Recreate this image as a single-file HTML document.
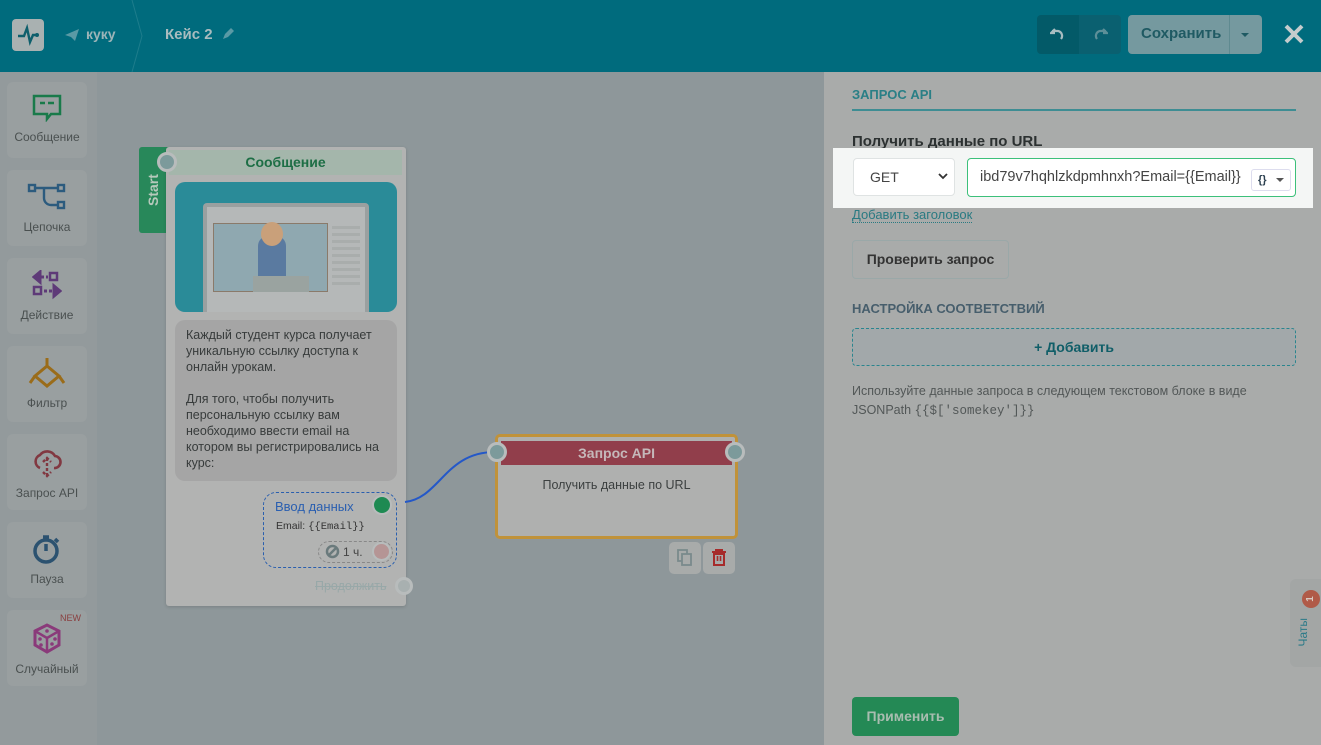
<!DOCTYPE html>
<html><head><meta charset="utf-8">
<style>
*{box-sizing:border-box;margin:0;padding:0}
body{width:1321px;height:745px;overflow:hidden;font-family:"Liberation Sans","DejaVu Sans",sans-serif;background:#8e979a;position:relative}
.abs{position:absolute}
.hdr{left:0;top:0;width:1321px;height:72px;background:#006b7d}
.side{left:0;top:72px;width:97px;height:673px;background:#939a9c}
.card{position:absolute;left:7px;width:80px;height:76px;background:#999fa0;border-radius:6px;text-align:center;font-size:12px;color:#4a5050}
.card svg{display:block;margin:12px auto 8px}
.panel{left:824px;top:72px;width:497px;height:673px;background:#a9abaa}
</style></head><body>
<div class="abs hdr"></div>
<div class="abs" style="left:12px;top:19px;width:32px;height:32px;background:#a9b1b1;border-radius:4px"></div>
<svg class="abs" style="left:12px;top:19px" width="32" height="32"><path d="M6 17h6l3-8 3 14 3-7h5" fill="none" stroke="#0e5f6c" stroke-width="2.4"/><circle cx="25" cy="16" r="2" fill="#0e5f6c"/></svg>
<svg class="abs" style="left:64px;top:28px" width="16" height="14"><path d="M1 7L15 1 11 13 7 9z" fill="#5a9aa5"/></svg>
<div class="abs" style="left:86px;top:26px;color:#9cb4b8;font-weight:bold;font-size:14px">куку</div>
<svg class="abs" style="left:128px;top:0" width="20" height="72"><path d="M4 0L14 36 4 72" fill="none" stroke="#1d7d8c" stroke-width="1"/></svg>
<div class="abs" style="left:165px;top:26px;color:#a9bcbf;font-weight:bold;font-size:15px">Кейс 2</div>
<svg class="abs" style="left:221px;top:27px" width="14" height="14"><path d="M2 12l2-5 6-6 3 3-6 6z" fill="#5a9aa5"/></svg>
<div class="abs" style="left:1037px;top:15px;width:42px;height:39px;background:#035a68;border-radius:4px 0 0 4px"></div>
<div class="abs" style="left:1079px;top:15px;width:42px;height:39px;background:#0a6070;border-radius:0 4px 4px 0"></div>
<svg class="abs" style="left:1050px;top:25px" width="16" height="16"><path d="M5 4L1 8 5 8M2 6h6a5 5 0 0 1 3 8" fill="none" stroke="#a8bcc0" stroke-width="2.2"/></svg>
<svg class="abs" style="left:1092px;top:25px" width="16" height="16"><path d="M11 4l4 4-4 0M14 6H8a5 5 0 0 0-3 8" fill="none" stroke="#5d8f98" stroke-width="2.2"/></svg>
<div class="abs" style="left:1128px;top:15px;width:134px;height:39px;background:#75999f;border-radius:4px"></div>
<div class="abs" style="left:1229px;top:15px;width:1px;height:39px;background:#5f8a90"></div>
<div class="abs" style="left:1141px;top:25px;color:#1f5a63;font-weight:bold;font-size:15px">Сохранить</div>
<div class="abs" style="left:1241px;top:33px;border:4px solid transparent;border-top-color:#1f5a63"></div>
<svg class="abs" style="left:1284px;top:24px" width="20" height="20"><path d="M2 2L18 18M18 2L2 18" stroke="#c5cccd" stroke-width="4"/></svg>

<div class="abs side"></div>
<div class="card" style="top:82px"><svg width="30" height="28"><path d="M2 2h26v18H19l-4 5v-5H2z" fill="none" stroke="#197a4a" stroke-width="2.5"/><path d="M8 9h5M16 9h6" stroke="#197a4a" stroke-width="2.5"/></svg>Сообщение</div>
<div class="card" style="top:170px"><svg width="40" height="30"><rect x="2" y="3" width="6" height="6" fill="none" stroke="#2c5b7e" stroke-width="2.4"/><rect x="31" y="3" width="6" height="6" fill="none" stroke="#2c5b7e" stroke-width="2.4"/><rect x="31" y="20" width="6" height="6" fill="none" stroke="#2c5b7e" stroke-width="2.4"/><path d="M8 6h23M17 6v10a7 7 0 0 0 7 7h7" fill="none" stroke="#2c5b7e" stroke-width="2.4"/></svg>Цепочка</div>
<div class="card" style="top:258px"><svg width="30" height="30"><path d="M2 7l6-5v10zM9 7h3M14 7h2" stroke="#5e3a78" stroke-width="3" fill="#5e3a78"/><rect x="18" y="3" width="7" height="7" fill="none" stroke="#5e3a78" stroke-width="2.5"/><rect x="2" y="17" width="7" height="7" fill="none" stroke="#5e3a78" stroke-width="2.5"/><path d="M12 21h3M17 21h3M28 21l-6-5v10z" stroke="#5e3a78" stroke-width="3" fill="#5e3a78"/></svg>Действие</div>
<div class="card" style="top:346px"><svg width="44" height="30"><path d="M22 0v8L10 18l12 10 12-10L22 8M10 18l-5 7M34 18l5 7" fill="none" stroke="#9a6c1a" stroke-width="3"/></svg>Фильтр</div>
<div class="card" style="top:434px"><svg width="32" height="32"><path d="M9 22a7 7 0 0 1 0-13 9 9 0 0 1 15 1 6 6 0 0 1-1 12" fill="none" stroke="#813841" stroke-width="2.6"/><path d="M16 12v18M12 16l4-4 4 4M12 26l4 4 4-4" fill="none" stroke="#813841" stroke-width="2.4" stroke-dasharray="3 2"/></svg>Запрос API</div>
<div class="card" style="top:522px"><svg width="30" height="30"><circle cx="14" cy="17" r="11" fill="none" stroke="#2c5270" stroke-width="3.5"/><path d="M14 10v7M11 3h6M23 5l3 3" stroke="#2c5270" stroke-width="3.5"/></svg>Пауза</div>
<div class="card" style="top:610px"><div style="position:absolute;right:6px;top:3px;font-size:9px;color:#8a4040">NEW</div><svg width="32" height="32"><path d="M4 9l12-6 12 6v14l-12 7-12-7z" fill="none" stroke="#8a3a7a" stroke-width="3"/><path d="M4 9l12 7 12-7M16 16v14" stroke="#8a3a7a" stroke-width="2.5" fill="none"/><circle cx="9" cy="17" r="1.8" fill="#8a3a7a"/><circle cx="10" cy="23" r="1.8" fill="#8a3a7a"/><circle cx="21" cy="22" r="1.8" fill="#8a3a7a"/><circle cx="24" cy="17" r="1.8" fill="#8a3a7a"/><circle cx="16" cy="9" r="1.8" fill="#8a3a7a"/></svg>Случайный</div>

<div class="abs" style="left:139px;top:147px;width:30px;height:86px;background:#28885a;border-radius:3px 0 0 3px"></div>
<div class="abs" style="left:139px;top:147px;width:28px;height:86px;color:#b7c9bc;font-weight:bold;font-size:14px;writing-mode:vertical-rl;transform:rotate(180deg);text-align:center;line-height:28px">Start</div>
<div class="abs" style="left:166px;top:147px;width:240px;height:459px;background:#b2b3b2;border-radius:3px;box-shadow:0 1px 3px rgba(0,0,0,.15)"></div>
<div class="abs" style="left:169px;top:150px;width:233px;height:25px;background:#a4b6ab;text-align:center;color:#1d6e45;font-weight:bold;font-size:14px;line-height:25px">Сообщение</div>
<div class="abs" style="left:157px;top:152px;width:20px;height:20px;border-radius:50%;background:#7c9a9b;border:3px solid #b8bcbc"></div>
<div class="abs" style="left:175px;top:182px;width:222px;height:130px;background:#2a8b98;border-radius:10px;overflow:hidden">
 <div style="position:absolute;left:28px;top:21px;width:166px;height:115px;background:#9aa0a0;border-radius:4px"></div>
 <div style="position:absolute;left:32px;top:25px;width:158px;height:110px;background:#b5b8b8"></div>
 <div style="position:absolute;left:38px;top:41px;width:115px;height:69px;background:#8fa8b0;border:1px solid #8a7a6a"></div>
 <div style="position:absolute;left:83px;top:54px;width:28px;height:56px;background:#5a7aa0;border-radius:10px 10px 0 0"></div>
 <div style="position:absolute;left:86px;top:40px;width:22px;height:24px;background:#c9a07a;border-radius:50%"></div>
 <div style="position:absolute;left:78px;top:94px;width:56px;height:16px;background:#9aa3a0"></div>
 <div style="position:absolute;left:157px;top:44px;width:28px;height:60px;background:repeating-linear-gradient(#a9adac 0 3px,#b5b8b8 3px 7px)"></div>
</div>
<div class="abs" style="left:175px;top:320px;width:222px;height:161px;background:#a5a5a5;border-radius:10px;padding:7px 11px;font-size:12.5px;line-height:16px;color:#373b3b">Каждый студент курса получает уникальную ссылку доступа к онлайн урокам.<br><br>Для того, чтобы получить персональную ссылку вам необходимо ввести email на котором вы регистрировались на курс:</div>
<div class="abs" style="left:263px;top:492px;width:134px;height:76px;border:1px dashed #2a5fae;border-radius:13px"></div>
<div class="abs" style="left:275px;top:499px;font-size:13px;color:#2a5fb0">Ввод данных</div>
<div class="abs" style="left:276px;top:520px;font-size:10.5px;color:#333">Email: <span style="font-family:'Liberation Mono',monospace">{{Email}}</span></div>
<div class="abs" style="left:374px;top:497px;width:16px;height:16px;border-radius:50%;background:#1e8a52;box-shadow:0 0 0 2px #b8bcbc"></div>
<div class="abs" style="left:318px;top:541px;width:75px;height:22px;border:1px dashed #888;border-radius:11px;font-size:12px;color:#444;line-height:20px;padding-left:24px">1 ч.</div>
<svg class="abs" style="left:325px;top:544px" width="15" height="15"><circle cx="7.5" cy="7.5" r="5.5" fill="none" stroke="#6a7a7c" stroke-width="2.5"/><path d="M4 11L11 4" stroke="#6a7a7c" stroke-width="2.5"/></svg>
<div class="abs" style="left:374px;top:544px;width:15px;height:15px;border-radius:50%;background:#b59595;box-shadow:0 0 0 2px #b8bcbc"></div>
<div class="abs" style="left:315px;top:579px;font-size:12.5px;color:#98a8a8;text-decoration:line-through">Продолжить</div>
<div class="abs" style="left:395px;top:577px;width:18px;height:18px;border-radius:50%;background:#a8b0b0;border:3px solid #b8bcbc"></div>
<svg class="abs" style="left:395px;top:440px" width="110" height="80"><path d="M10 62C45 58 50 12 100 12" fill="none" stroke="#2458c8" stroke-width="2"/></svg>

<div class="abs" style="left:495px;top:434px;width:243px;height:105px;border:3px solid #c0923a;border-radius:5px;background:#afb0af"></div>
<div class="abs" style="left:501px;top:441px;width:231px;height:24px;background:#913e4b;color:#c5b8ba;font-weight:bold;font-size:14px;text-align:center;line-height:24px">Запрос API</div>
<div class="abs" style="left:496px;top:478px;width:241px;text-align:center;font-size:12.5px;color:#3c4040">Получить данные по URL</div>
<div class="abs" style="left:487px;top:442px;width:20px;height:20px;border-radius:50%;background:#7c9a9b;border:3px solid #b8bcbc"></div>
<div class="abs" style="left:725px;top:442px;width:20px;height:20px;border-radius:50%;background:#7c9a9b;border:3px solid #b8bcbc"></div>
<div class="abs" style="left:669px;top:542px;width:32px;height:32px;background:#a8abaa;border-radius:5px"></div>
<div class="abs" style="left:703px;top:542px;width:32px;height:32px;background:#a8abaa;border-radius:5px"></div>
<svg class="abs" style="left:677px;top:549px" width="16" height="18"><rect x="1" y="1" width="9" height="11" fill="none" stroke="#7a8a8c" stroke-width="1.8"/><rect x="5" y="5" width="9" height="11" fill="#a8abaa" stroke="#7a8a8c" stroke-width="1.8"/></svg>
<svg class="abs" style="left:711px;top:549px" width="16" height="18"><path d="M1 3h14M5 3V1h6v2M3 5h10v11H3z" fill="none" stroke="#a62b2b" stroke-width="2"/><path d="M6.5 7v5M9.5 7v5" stroke="#a62b2b" stroke-width="1.6"/></svg>

<div class="abs panel"></div>
<div class="abs" style="left:852px;top:87px;font-size:13px;font-weight:bold;color:#2a7f86">ЗАПРОС API</div>
<div class="abs" style="left:852px;top:109px;width:444px;height:2px;background:#3e8d93"></div>
<div class="abs" style="left:852px;top:133px;font-size:15px;font-weight:bold;color:#2c3131">Получить данные по URL</div>
<div class="abs" style="left:833px;top:148px;width:480px;height:60px;background:#f4f6f5"></div>
<div class="abs" style="left:853px;top:158px;width:102px;height:38px;background:#fff;border:1px solid #dfe3e3;border-radius:4px;font-size:14px;color:#444;line-height:36px;padding-left:16px">GET</div>
<svg class="abs" style="left:938px;top:173px" width="10" height="8"><path d="M1 1l4 4 4-4" fill="none" stroke="#333" stroke-width="1.8"/></svg>
<div class="abs" style="left:967px;top:158px;width:329px;height:39px;background:#fff;border:1px solid #3cc07a;border-radius:4px;font-size:14.5px;color:#444;line-height:37px;padding-left:12px;overflow:hidden;white-space:nowrap">ibd79v7hqhlzkdpmhnxh?Email={{Email}}</div>
<div class="abs" style="left:1251px;top:169px;width:40px;height:22px;background:#fff;border:1px solid #dde;border-radius:3px;font-size:11px;font-weight:bold;color:#2c4050;line-height:20px;padding-left:6px">{}</div>
<div class="abs" style="left:1276px;top:178px;border:4px solid transparent;border-top-color:#555"></div>
<div class="abs" style="left:852px;top:207px;font-size:13px;color:#2a7a82;border-bottom:1px dotted #2a7a82;line-height:15px">Добавить заголовок</div>
<div class="abs" style="left:852px;top:240px;width:157px;height:39px;border:1px solid #9aa8a8;border-radius:4px;font-size:14px;font-weight:bold;color:#333;line-height:37px;text-align:center">Проверить запрос</div>
<div class="abs" style="left:852px;top:301px;font-size:13px;font-weight:bold;color:#475e6c">НАСТРОЙКА СООТВЕТСТВИЙ</div>
<div class="abs" style="left:852px;top:328px;width:444px;height:38px;border:1px dashed #2a858e;border-radius:4px;background:#a2a8aa;text-align:center;line-height:36px;font-weight:bold;font-size:14px;color:#105e68">+ Добавить</div>
<div class="abs" style="left:852px;top:382px;font-size:12.5px;line-height:19px;color:#525757">Используйте данные запроса в следующем текстовом блоке в виде<br>JSONPath <span style="font-family:'Liberation Mono',monospace">{{$['somekey']}}</span></div>
<div class="abs" style="left:852px;top:697px;width:107px;height:39px;background:#248955;border-radius:4px;color:#a9bdb0;font-weight:bold;font-size:14px;text-align:center;line-height:39px">Применить</div>
<div class="abs" style="left:1290px;top:579px;width:40px;height:88px;background:#a3a6a5;border-radius:6px"></div>
<div class="abs" style="left:1302px;top:590px;width:18px;height:18px;border-radius:50%;background:#b05a48;color:#d8c8c0;font-size:10px;font-weight:bold;text-align:center;line-height:18px;transform:rotate(-90deg)">1</div>
<div class="abs" style="left:1296px;top:618px;font-size:12px;color:#2a7a88;writing-mode:vertical-rl;transform:rotate(180deg)">Чаты</div>
</body></html>
